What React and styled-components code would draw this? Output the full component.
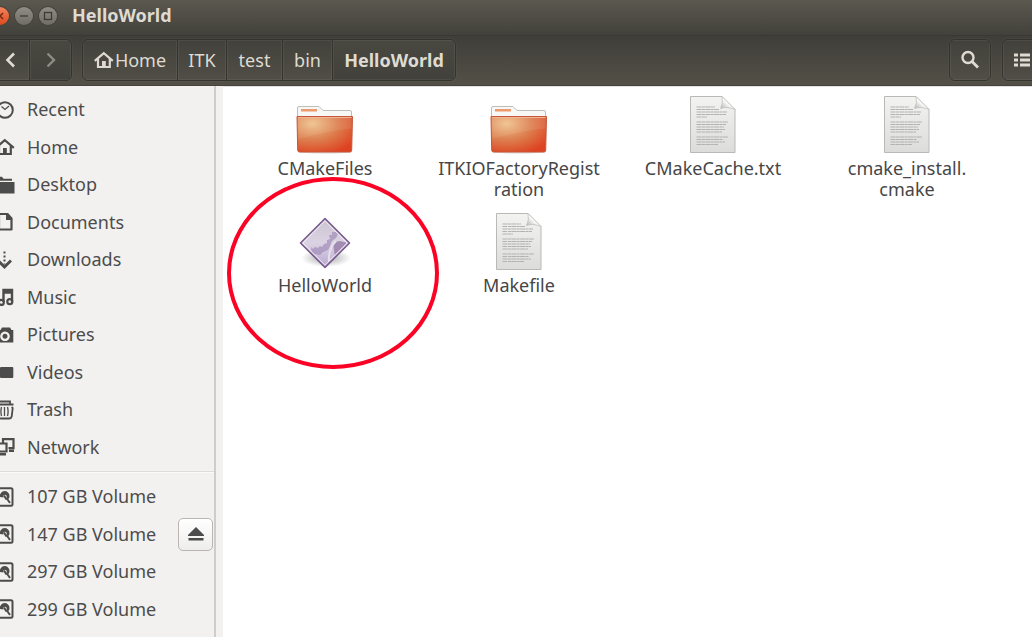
import React from "react";
import styled, { createGlobalStyle } from "styled-components";

const GlobalStyle = createGlobalStyle`
  * { box-sizing: border-box; }
  html, body { margin: 0; background: #ffffff; }
  body, button, a {
    font-family: "Noto Sans", "Open Sans", sans-serif;
    font-size: 18px;
    line-height: 21px;
  }
  button { margin: 0; padding: 0; border: 0; background: none; color: inherit; }
  ul { list-style: none; margin: 0; padding: 0; }
  svg { display: block; flex: none; }
`;

const Window = styled.div`
  display: flex;
  flex-direction: column;
  min-height: 100vh;
  overflow: hidden;
`;

const TitleBar = styled.header`
  display: flex;
  align-items: center;
  gap: 15px;
  height: 36px;
  padding-bottom: 4px;
  background: linear-gradient(#5b584f, #42413b);
  border-bottom: 1px solid #3a3934;
`;

const WindowControls = styled.div`
  display: flex;
  gap: 6px;
  margin-left: -9px;
`;

const ControlButton = styled.button`
  width: 18px;
  height: 18px;
  border-radius: 50%;
  color: #3c3b36;
  background: ${(p) =>
    p.$close
      ? "linear-gradient(#f4835c, #dd4a1e)"
      : "linear-gradient(#8f8d85, #6f6d66)"};
  box-shadow: 0 0 0 1px #45433c;
`;

const Title = styled.h1`
  margin: 0;
  font-size: 18px;
  line-height: 21px;
  font-weight: 700;
  color: #dfdbd2;
`;

const ToolBar = styled.div`
  display: flex;
  align-items: center;
  height: 50px;
  background: linear-gradient(#3f3e39, #535047);
  border-bottom: 1px solid #45433c;
`;

const ButtonGroup = styled.div`
  display: flex;
  height: 42px;
  margin-bottom: 2px;
  overflow: hidden;
  border: 1px solid #34332e;
  border-radius: 6px;
  box-shadow: 0 0 0 1px rgba(255, 255, 255, 0.03);
`;

const History = styled(ButtonGroup)`
  margin-left: -11px;
  margin-right: 10px;
`;

const Path = styled(ButtonGroup).attrs({ as: "nav" })`
  margin-right: auto;
`;

const Tools = styled.div`
  display: flex;
  gap: 11px;
  margin-right: -12px;
`;

const ToolButton = styled.button`
  display: flex;
  align-items: center;
  justify-content: center;
  gap: 1px;
  width: ${(p) => p.$width}px;
  padding-top: 1px;
  font-size: 18px;
  font-weight: ${(p) => (p.$current ? 700 : 400)};
  color: ${(p) => (p.$dim ? "#8f8c84" : "#dfdbd2")};
  background: ${(p) =>
    p.$current || p.$dim
      ? "linear-gradient(#484740, #42413b)"
      : "linear-gradient(#42413b, #504e46)"};
  box-shadow: inset 0 0 0 1px rgba(255, 255, 255, 0.06);
  & + & { border-left: 1px solid #34332e; }
`;

const Body = styled.div`
  display: flex;
  flex: 1;
  background: #f2f1f0;
`;

const SideBar = styled.aside`
  flex: none;
  width: 216px;
  padding-top: 5px;
  border-right: 2px solid #cfcdcb;
  color: #4c4c4c;
`;

const PlaceList = styled.ul`
  display: grid;
  grid-auto-rows: 1fr;
  height: ${(p) => p.$height}px;
`;

const Divider = styled.hr`
  margin: 5px 0;
  border: 0;
  border-top: 1px solid #dedcda;
  border-bottom: 1px solid #fafafa;
`;

const Place = styled.li`
  display: flex;
  align-items: center;
  padding-right: 1px;
`;

const PlaceLink = styled.a`
  display: flex;
  flex: 1;
  align-items: center;
  gap: 12px;
  margin-left: -5px;
  color: inherit;
  text-decoration: none;
`;

const EjectButton = styled.button`
  display: flex;
  align-items: center;
  justify-content: center;
  width: 35px;
  height: 33px;
  border: 1px solid #b8b5b2;
  border-radius: 5px;
  background: linear-gradient(#ffffff, #ededec);
`;

const Files = styled.main`
  flex: 1;
  margin-left: 7px;
  padding: 9px 0 0 5px;
  background: #ffffff;
  border-top: 1px solid #e4e2e0;
`;

const FileGrid = styled.ul`
  display: grid;
  grid-template-columns: repeat(auto-fill, 194px);
  row-gap: 13px;
`;

const FileCell = styled.li`
  position: relative;
  display: flex;
  justify-content: center;
  min-height: 104px;
`;

const FileButton = styled.button`
  display: flex;
  flex-direction: column;
  align-items: center;
  gap: 4px;
  width: 170px;
  color: #464646;
`;

const FileName = styled.span`
  white-space: pre-line;
`;

const Highlight = styled.svg`
  position: absolute;
  left: -2px;
  top: -37px;
  pointer-events: none;
`;

const paths = {
  Recent: (
    <>
      <circle cx="10" cy="10" r="7.8" fill="none" stroke="currentColor" strokeWidth="2" />
      <path d="M6.5 6.5l3.5 3 4-3.5" fill="none" stroke="currentColor" strokeWidth="1.3" />
    </>
  ),
  Home: (
    <>
      <path d="M.8 10.800L9.800 3.200l9 7.600" fill="none" stroke="currentColor" strokeWidth="2.200" />
      <path d="M4 9v8h11.800V9" fill="none" stroke="currentColor" strokeWidth="2.200" />
      <path d="M8 11h3.800v6H8z" fill="currentColor" />
    </>
  ),
  Desktop: (
    <path d="M1 1.800h6l1.500 2H17v2H1zM0 7h19.500v11.500H0z" fill="currentColor" />
  ),
  Documents: (
    <>
      <path d="M4 2h8.500l4 4.500v11H4z" fill="none" stroke="currentColor" strokeWidth="2.200" strokeLinejoin="round" />
      <path d="M11 2h2l4 4.500V8h-6z" fill="currentColor" />
    </>
  ),
  Downloads: (
    <>
      <path d="M9.500 1.500v13" fill="none" stroke="currentColor" strokeWidth="2" strokeDasharray="2 2" />
      <path d="M3 10.500l6.500 6.500 6.500-6.500" fill="none" stroke="currentColor" strokeWidth="2.800" />
    </>
  ),
  Music: (
    <>
      <path d="M8.500 15V3h8.500v11.500M8.500 5.500H17" fill="none" stroke="currentColor" strokeWidth="2.400" />
      <circle cx="6.300" cy="15.400" r="2.500" fill="none" stroke="currentColor" strokeWidth="2.200" />
      <circle cx="14.800" cy="14.700" r="2.500" fill="none" stroke="currentColor" strokeWidth="2.200" />
    </>
  ),
  Pictures: (
    <path
      d="M2 5h3.500L7 2.500h8L16.500 5H18.300v12.500H2zM10 6.500a4.800 4.800 0 1 0 .01 0zM10 8.800a2.500 2.500 0 1 1-.01 0z"
      fill="currentColor"
      fillRule="evenodd"
    />
  ),
  Videos: (
    <path d="M0 6l5 2.500V6q0-1 1-1h11.300q1 0 1 1v9q0 1-1 1H6q-1 0-1-1v-2.500L0 15z" fill="currentColor" />
  ),
  Trash: (
    <>
      <path d="M2 4V1.500h13V4M1 4.500h17.500" fill="none" stroke="currentColor" strokeWidth="1.800" />
      <path d="M2.500 6.500l.8 10q.2 2 2.500 2h8.400q2 0 2.500-2l1-8.500-1-1" fill="none" stroke="currentColor" strokeWidth="1.800" />
      <path d="M6.500 7q-1.200 4.500 0 9M9.500 7v9M12.500 7q1.200 4.500 0 9" fill="none" stroke="currentColor" strokeWidth="1.300" />
    </>
  ),
  Network: (
    <>
      <path d="M8 6V2.200h10.500v9h-5" fill="none" stroke="currentColor" strokeWidth="2.200" />
      <path d="M2 6.500h9.500v8H2z" fill="none" stroke="currentColor" strokeWidth="2.200" />
      <path d="M3 16h8v2.500H3zM14 12.500h5v2.500h-5z" fill="currentColor" />
    </>
  ),
  Volume: (
    <>
      <rect x="1.500" y="1.200" width="16" height="17.500" rx="1.500" fill="none" stroke="currentColor" strokeWidth="2" />
      <path d="M9.500 4a5 5 0 0 1 5 5q0 1.800-1 3l-2-1.500q.8-2.500-1.500-2.800-2.500.3-1.500 2.800L5 10a5 5 0 0 1 4.500-6z" fill="currentColor" />
      <path d="M9 8.500l2.500 4M11.500 11l3.500 5" fill="none" stroke="currentColor" strokeWidth="2" />
    </>
  ),
};

const PlaceIcon = ({ name }) => (
  <svg width="20" height="20" viewBox="0 0 20 20" aria-hidden="true">
    {paths[name]}
  </svg>
);

const FolderIcon = () => (
  <svg width="64" height="58" viewBox="0 0 64 58" aria-hidden="true">
    <defs>
      <radialGradient id="folder" cx="0.28" cy="0.2" r="0.9">
        <stop offset="0" stopColor="#efc18b" />
        <stop offset="0.5" stopColor="#dd8050" />
        <stop offset="1" stopColor="#dd4321" />
      </radialGradient>
    </defs>
    <ellipse cx="32" cy="56" rx="27" ry="1.500" fill="#000" opacity=".15" />
    <path d="M4.500 28V12q0-1.500 1.500-1.500h20l4 4h27q1.500 0 1.500 1.500v12z" fill="#f7f7f6" stroke="#bdbdba" />
    <rect x="8" y="13" width="16" height="2.500" fill="#ee9a6d" />
    <path d="M4 20.500h55.500l-.8 33.500q0 2-1.700 2H6.500q-1.700 0-1.800-2z" fill="url(#folder)" stroke="#c4573a" />
    <path d="M5 21.500h53.500v11Q34 35 5.500 43z" fill="#fff" opacity=".08" />
    <path d="M5 21.500h53.500" stroke="#f4b493" />
  </svg>
);

const textRows = [11, 13.5, 16, 18.5, 21, 26, 28.5, 31, 33.5, 36, 41, 43.5, 46, 48.5];
const rowEnds = [34, 38, 46, 45, 26, 47, 45, 43, 44, 41, 47, 42, 44, 37];

const DocumentIcon = () => (
  <svg width="64" height="58" viewBox="0 0 64 58" aria-hidden="true">
    <defs>
      <linearGradient id="paper" x1="0" y1="0" x2="0" y2="1">
        <stop offset="0" stopColor="#f3f3f2" />
        <stop offset="1" stopColor="#dcdcdb" />
      </linearGradient>
      <linearGradient id="fold" x1="0" y1="1" x2="1" y2="0">
        <stop offset="0" stopColor="#a9a9a8" />
        <stop offset="0.5" stopColor="#ffffff" />
        <stop offset="1" stopColor="#e4e4e3" />
      </linearGradient>
    </defs>
    <path d="M9.500.5H41l13 13v43H9.500z" fill="url(#paper)" stroke="#b9b9b7" />
    <g stroke="#b2b2b0" strokeWidth="1.200" strokeDasharray="5 .4 3 .4">
      {textRows.map((y, i) => (
        <path key={y} d={`M15.500 ${y}H${rowEnds[i]}`} />
      ))}
    </g>
    <path d="M41 .5q1.500 6-1.500 12 6-2.500 14.500 1z" fill="url(#fold)" stroke="#c0c0be" strokeWidth=".8" />
  </svg>
);

const ProgramIcon = () => (
  <svg width="64" height="58" viewBox="0 0 64 58" aria-hidden="true">
    <defs>
      <linearGradient id="gem" x1="0" y1="0" x2="0" y2="1">
        <stop offset="0" stopColor="#cbc3d0" />
        <stop offset="0.5" stopColor="#dbd3e3" />
        <stop offset="1" stopColor="#b9a9d0" />
      </linearGradient>
      <radialGradient id="shade">
        <stop offset="0" stopColor="#000" stopOpacity=".35" />
        <stop offset="1" stopColor="#000" stopOpacity="0" />
      </radialGradient>
      <clipPath id="gemClip">
        <path d="M32 8l22 22-22 22L10 30z" />
      </clipPath>
    </defs>
    <ellipse cx="33" cy="45" rx="25" ry="9" fill="url(#shade)" />
    <path d="M32 5.500L56.500 30 32 54.500 7.500 30z" fill="url(#gem)" stroke="#76578a" strokeWidth="1.500" strokeLinejoin="round" />
    <g clipPath="url(#gemClip)">
      <path
        d="M18 34l2 2 2-2 3 1 2-2 2 1 2-3 3-1 0-3 3-1-1-4 3 0 0-3 4 0 2 2-2 4-4 3-2 5-2 4-5 2-3 3-5-1-3 1z"
        fill="#9e87b5"
        opacity=".65"
      />
      <path d="M40 31q3-3 7-3l8 2-13 13q-1-6-2-12z" fill="#967aa6" opacity=".8" />
      <path d="M36 49q-1-13 7-21" fill="none" stroke="#e6dfee" strokeWidth="2" />
    </g>
    <path d="M32 8l22 22-22 22L10 30z" fill="none" stroke="#fff" opacity=".6" />
  </svg>
);

const places = ["Recent", "Home", "Desktop", "Documents", "Downloads", "Music", "Pictures", "Videos", "Trash", "Network"];

const volumes = [
  { name: "107 GB Volume" },
  { name: "147 GB Volume", mounted: true },
  { name: "297 GB Volume" },
  { name: "299 GB Volume" },
];

const crumbs = [
  { name: "Home", width: 94, home: true },
  { name: "ITK", width: 49 },
  { name: "test", width: 56 },
  { name: "bin", width: 50 },
  { name: "HelloWorld", width: 123, current: true },
];

const files = [
  { name: "CMakeFiles", Icon: FolderIcon },
  { name: "ITKIOFactoryRegist\nration", Icon: FolderIcon },
  { name: "CMakeCache.txt", Icon: DocumentIcon },
  { name: "cmake_install.\ncmake", Icon: DocumentIcon },
  { name: "HelloWorld", Icon: ProgramIcon, circled: true },
  { name: "Makefile", Icon: DocumentIcon },
];

export default function App() {
  return (
    <Window>
      <GlobalStyle />
      <TitleBar>
        <WindowControls>
          <ControlButton $close aria-label="Close">
            <svg width="18" height="18" viewBox="0 0 18 18">
              <path d="M6 6l6 6M12 6l-6 6" stroke="#6b2a14" strokeWidth="1.500" />
            </svg>
          </ControlButton>
          <ControlButton aria-label="Minimize">
            <svg width="18" height="18" viewBox="0 0 18 18">
              <path d="M5 9h8" stroke="currentColor" strokeWidth="1.300" />
            </svg>
          </ControlButton>
          <ControlButton aria-label="Maximize">
            <svg width="18" height="18" viewBox="0 0 18 18">
              <rect x="5.500" y="5.500" width="7" height="7" fill="none" stroke="currentColor" strokeWidth="1.300" />
            </svg>
          </ControlButton>
        </WindowControls>
        <Title>HelloWorld</Title>
      </TitleBar>
      <ToolBar>
        <History>
          <ToolButton $width={39} aria-label="Back">
            <svg width="18" height="18" viewBox="0 0 18 18">
              <path d="M13 2.500L6.500 9l6.500 6.500" fill="none" stroke="currentColor" strokeWidth="2.600" />
            </svg>
          </ToolButton>
          <ToolButton $width={42} $dim aria-label="Forward">
            <svg width="18" height="18" viewBox="0 0 18 18">
              <path d="M5.500 2.500L12 9l-6.500 6.500" fill="none" stroke="currentColor" strokeWidth="2.400" />
            </svg>
          </ToolButton>
        </History>
        <Path aria-label="Path">
          {crumbs.map((c) => (
            <ToolButton key={c.name} $width={c.width} $current={c.current}>
              {c.home && <PlaceIcon name="Home" />}
              {c.name}
            </ToolButton>
          ))}
        </Path>
        <Tools>
          <ButtonGroup>
            <ToolButton $width={40} aria-label="Search">
              <svg width="20" height="20" viewBox="0 0 20 20">
                <circle cx="8" cy="7.500" r="5.500" fill="none" stroke="currentColor" strokeWidth="2.400" />
                <path d="M12 11.500l6 6" stroke="currentColor" strokeWidth="2.800" />
              </svg>
            </ToolButton>
          </ButtonGroup>
          <ButtonGroup>
            <ToolButton $width={40} aria-label="List view">
              <svg width="20" height="18" viewBox="0 0 20 18">
                <path d="M1 4h4M1 9h4M1 14h4M7 4h10M7 9h10M7 14h10" stroke="currentColor" strokeWidth="2.800" />
              </svg>
            </ToolButton>
          </ButtonGroup>
        </Tools>
      </ToolBar>
      <Body>
        <SideBar>
          <PlaceList $height={375}>
            {places.map((name) => (
              <Place key={name}>
                <PlaceLink href="#">
                  <PlaceIcon name={name} />
                  {name}
                </PlaceLink>
              </Place>
            ))}
          </PlaceList>
          <Divider />
          <PlaceList $height={150}>
            {volumes.map((v) => (
              <Place key={v.name}>
                <PlaceLink href="#">
                  <PlaceIcon name="Volume" />
                  {v.name}
                </PlaceLink>
                {v.mounted && (
                  <EjectButton aria-label="Eject">
                    <svg width="18" height="18" viewBox="0 0 18 18">
                      <path d="M9 2l8 8v1H1v-1zM1.500 13h15v2.500h-15z" fill="#4c4c4c" />
                    </svg>
                  </EjectButton>
                )}
              </Place>
            ))}
          </PlaceList>
        </SideBar>
        <Files>
          <FileGrid>
            {files.map(({ name, Icon, circled }) => (
              <FileCell key={name}>
                <FileButton>
                  <Icon />
                  <FileName>{name}</FileName>
                </FileButton>
                {circled && (
                  <Highlight width="214" height="194" viewBox="0 0 214 194" aria-hidden="true">
                    <ellipse cx="107" cy="97" rx="104" ry="94" fill="none" stroke="#fb0324" strokeWidth="4" />
                  </Highlight>
                )}
              </FileCell>
            ))}
          </FileGrid>
        </Files>
      </Body>
    </Window>
  );
}
